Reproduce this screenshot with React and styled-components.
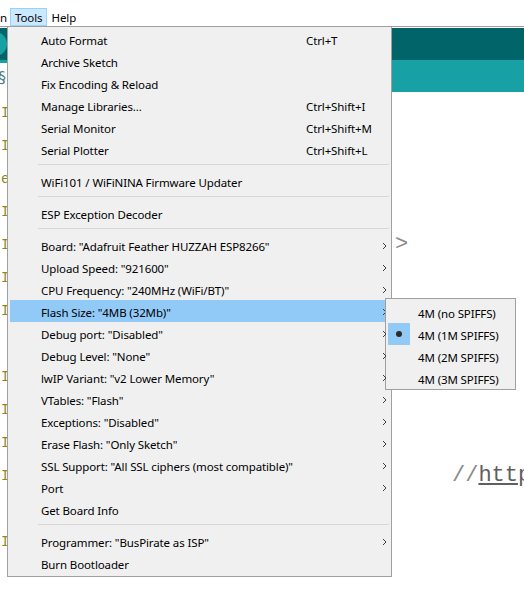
import React from "react";
import styled, { createGlobalStyle } from "styled-components";

const GlobalStyle = createGlobalStyle`
  html, body {
    margin: 0;
    padding: 0;
    background: #fff;
  }
  body {
    font-family: "Segoe UI", "Noto Sans", sans-serif;
    overflow: hidden;
  }
`;

const menuItems = [
  { label: "Auto Format", shortcut: "Ctrl+T" },
  { label: "Archive Sketch" },
  { label: "Fix Encoding & Reload" },
  { label: "Manage Libraries...", shortcut: "Ctrl+Shift+I" },
  { label: "Serial Monitor", shortcut: "Ctrl+Shift+M" },
  { label: "Serial Plotter", shortcut: "Ctrl+Shift+L" },
  "sep",
  { label: "WiFi101 / WiFiNINA Firmware Updater" },
  "sep",
  { label: "ESP Exception Decoder" },
  "sep",
  { label: 'Board: "Adafruit Feather HUZZAH ESP8266"', sub: true },
  { label: 'Upload Speed: "921600"', sub: true },
  { label: 'CPU Frequency: "240MHz (WiFi/BT)"', sub: true },
  { label: 'Flash Size: "4MB (32Mb)"', sub: true, active: true },
  { label: 'Debug port: "Disabled"', sub: true },
  { label: 'Debug Level: "None"', sub: true },
  { label: 'lwIP Variant: "v2 Lower Memory"', sub: true },
  { label: 'VTables: "Flash"', sub: true },
  { label: 'Exceptions: "Disabled"', sub: true },
  { label: 'Erase Flash: "Only Sketch"', sub: true },
  { label: 'SSL Support: "All SSL ciphers (most compatible)"', sub: true },
  { label: "Port", sub: true },
  { label: "Get Board Info" },
  "sep",
  { label: 'Programmer: "BusPirate as ISP"', sub: true },
  { label: "Burn Bootloader" },
];

const flashOptions = [
  { label: "4M (no SPIFFS)" },
  { label: "4M (1M SPIFFS)", checked: true },
  { label: "4M (2M SPIFFS)" },
  { label: "4M (3M SPIFFS)" },
];

// clipped code lines at the left edge + bits peeking out right of the menu
const codeLines = [
  { mark: "I" },
  { mark: "I" },
  { mark: "e" },
  { mark: "I" },
  { mark: "I", code: ">", indent: 387 },
  { mark: "I" },
  { mark: "I" },
  {},
  { mark: "I" },
  { mark: "I" },
  { mark: "I" },
  { mark: "I", code: "//", link: "http", indent: 444 },
  {},
  { mark: "I" },
  {},
];

const Chevron = () => (
  <svg width="5" height="8" viewBox="0 0 5 8">
    <polyline points="1,1 4,4 1,7" fill="none" stroke="#3c3c3c" strokeWidth="1" />
  </svg>
);

const App = () => {
  return (
    <Window>
      <GlobalStyle />
      <MenuBar>
        <BarItem $clip>n</BarItem>
        <BarItem $open>Tools</BarItem>
        <BarItem>Help</BarItem>
      </MenuBar>

      <Toolbar>
        <ToolButton />
      </Toolbar>

      <TabBar>
        <Tab>§</Tab>
      </TabBar>

      <Editor>
        {codeLines.map((l, i) => (
          <Line key={i}>
            <Mark>{l.mark}</Mark>
            {l.code && (
              <Code $indent={l.indent}>
                {l.code}
                {l.link && <u>{l.link}</u>}
              </Code>
            )}
          </Line>
        ))}
      </Editor>

      <Menu>
        {menuItems.map((it, i) =>
          it === "sep" ? (
            <Separator key={i} />
          ) : (
            <Item key={i} $active={it.active}>
              <Label>{it.label}</Label>
              <Shortcut>{it.shortcut}</Shortcut>
              <Arrow>{it.sub && <Chevron />}</Arrow>
              {it.active && (
                <SubMenu>
                  {flashOptions.map((o) => (
                    <SubItem key={o.label}>
                      <Check $on={o.checked}>{o.checked && <Dot />}</Check>
                      <SubLabel>{o.label}</SubLabel>
                    </SubItem>
                  ))}
                </SubMenu>
              )}
            </Item>
          )
        )}
      </Menu>
    </Window>
  );
};

const Window = styled.div`
  position: relative;
  width: 524px;
  height: 589px;
  overflow: hidden;
  background: #fff;
`;

const MenuBar = styled.div`
  height: 26px;
  display: flex;
  align-items: flex-end;
  border-bottom: 1px solid #a0a0a0;
  margin-bottom: 1px;
  font-size: 11.5px;
  letter-spacing: -0.1px;
  color: #000;
`;

const BarItem = styled.div`
  height: 18px;
  line-height: 17px;
  box-sizing: border-box;
  padding: 0 3px 0 4px;
  margin-left: ${(p) => (p.$clip ? "-5px" : "0")};
  margin-right: ${(p) => (p.$clip ? "-1px" : "0")};
  border: 1px solid ${(p) => (p.$open ? "#99d1ff" : "transparent")};
  background: ${(p) => (p.$open ? "#cce8ff" : "transparent")};
`;

const Toolbar = styled.div`
  height: 32px;
  background: #006468;
  display: flex;
  align-items: center;
`;

const ToolButton = styled.div`
  width: 24px;
  height: 24px;
  border-radius: 50%;
  margin-left: -17px;
  background: #17a1a5;
`;

const TabBar = styled.div`
  height: 32px;
  box-sizing: border-box;
  padding-top: 3px;
  background: #17a1a5;
  display: flex;
`;

const Tab = styled.div`
  width: 120px;
  background: #fff;
  color: #4f7c7e;
  font: 16px "DejaVu Sans", sans-serif;
  display: flex;
  align-items: center;
  text-indent: -2px;
`;

const Editor = styled.div`
  padding-top: 4px;
  display: flex;
  flex-direction: column;
`;

const Line = styled.div`
  height: 33px;
  display: flex;
  align-items: center;
`;

const Mark = styled.span`
  width: 8px;
  flex: none;
  padding-left: 1px;
  box-sizing: border-box;
  font: 14px "Liberation Mono", monospace;
  color: #8c8a1f;
`;

const Code = styled.span`
  margin-left: ${(p) => p.$indent}px;
  font: 22px "Liberation Mono", monospace;
  color: #8a8a8a;
  white-space: pre;

  u {
    color: #5f5f5f;
  }
`;

const Menu = styled.div`
  position: absolute;
  left: 7px;
  top: 26px;
  width: 385px;
  box-sizing: border-box;
  padding: 1px 2px 2px;
  background: #f0f0f0;
  border: 1px solid #a0a0a0;
  font-size: 11.5px;
  letter-spacing: -0.12px;
  color: #000;
  z-index: 2;
`;

const Item = styled.div`
  position: relative;
  height: 22px;
  box-sizing: border-box;
  padding-top: 2px;
  display: grid;
  grid-template-columns: 265px 1fr 9px;
  align-items: center;
  padding-left: 31px;
  background: ${(p) => (p.$active ? "#91c9f7" : "transparent")};
  white-space: nowrap;
`;

const Label = styled.span`
  min-width: 0;
`;

const Shortcut = styled.span``;

const Arrow = styled.span`
  display: flex;
  align-items: center;
  padding-left: 2px;
  margin-top: -1px;
`;

const Separator = styled.div`
  height: 1px;
  margin: 4px 0 5px 28px;
  background: #d7d7d7;
`;

const SubMenu = styled.div`
  position: absolute;
  left: calc(100% - 4px);
  top: -2px;
  width: 131px;
  box-sizing: border-box;
  padding: 2px 2px 0;
  background: #f0f0f0;
  border: 1px solid #a0a0a0;
`;

const SubItem = styled.div`
  height: 22px;
  display: flex;
  align-items: center;
`;

const Check = styled.span`
  width: 22px;
  height: 22px;
  display: flex;
  align-items: center;
  justify-content: center;
  background: ${(p) => (p.$on ? "#91c9f7" : "transparent")};
`;

const Dot = styled.span`
  width: 6px;
  height: 6px;
  border-radius: 50%;
  background: #2a2a2a;
`;

const SubLabel = styled.span`
  padding-left: 8px;
  padding-top: 2px;
`;

export default App;
